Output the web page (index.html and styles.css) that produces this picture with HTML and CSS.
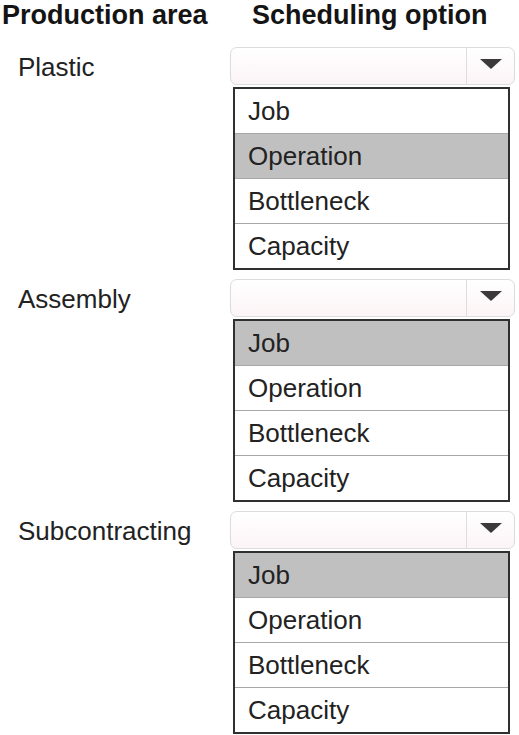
FILE: index.html
```html
<!DOCTYPE html>
<html>
<head>
<meta charset="utf-8">
<link rel="stylesheet" href="styles.css">
</head>
<body>
<div class="page">
  <div class="head">
    <div class="head-a">Production area</div>
    <div class="head-b">Scheduling option</div>
  </div>

  <div class="group">
    <div class="label">Plastic</div>
    <div class="select"><div class="field"></div><div class="btn"><span class="tri"></span></div></div>
    <div class="list">
      <div class="opt">Job</div>
      <div class="opt sel">Operation</div>
      <div class="opt">Bottleneck</div>
      <div class="opt">Capacity</div>
    </div>
  </div>

  <div class="group">
    <div class="label">Assembly</div>
    <div class="select"><div class="field"></div><div class="btn"><span class="tri"></span></div></div>
    <div class="list">
      <div class="opt sel">Job</div>
      <div class="opt">Operation</div>
      <div class="opt">Bottleneck</div>
      <div class="opt">Capacity</div>
    </div>
  </div>

  <div class="group">
    <div class="label">Subcontracting</div>
    <div class="select"><div class="field"></div><div class="btn"><span class="tri"></span></div></div>
    <div class="list">
      <div class="opt sel">Job</div>
      <div class="opt">Operation</div>
      <div class="opt">Bottleneck</div>
      <div class="opt">Capacity</div>
    </div>
  </div>
</div>
</body>
</html>
```

FILE: styles.css
```css
html, body {
  margin: 0;
  padding: 0;
  background: #ffffff;
}
body {
  font-family: "Liberation Sans", Arial, sans-serif;
  color: #222222;
  width: 519px;
  height: 735px;
  overflow: hidden;
}
.page {
  display: flex;
  flex-direction: column;
  gap: 9px;
}
.head {
  display: flex;
  font-weight: bold;
  font-size: 27px;
  line-height: 31px;
  color: #141414;
  margin-bottom: 7px;
}
.head-a {
  padding-left: 2px;
  width: 250px;
}
.group {
  display: grid;
  grid-template-columns: 230px 285px;
  grid-template-rows: 38px auto;
  row-gap: 2px;
}
.label {
  grid-column: 1;
  grid-row: 1;
  align-self: center;
  padding-left: 18px;
  font-size: 26px;
  line-height: 30px;
  padding-top: 2px;
  color: #222;
}
.select {
  grid-column: 2;
  grid-row: 1;
  display: flex;
  border: 1px solid #dcdcdc;
  border-radius: 7px;
  background: linear-gradient(#ffffff, #fcf4f6);
  box-shadow: 0 0 1px #eeeeee;
}
.field {
  flex: 1;
}
.btn {
  width: 47px;
  border-left: 1px solid #dddddd;
  display: flex;
  align-items: center;
  justify-content: center;
}
.tri {
  width: 0;
  height: 0;
  border-left: 11px solid transparent;
  border-right: 11px solid transparent;
  border-top: 10px solid #3a3a3a;
  margin-bottom: 4px;
}
.list {
  grid-column: 2;
  grid-row: 2;
  margin-left: 3px;
  width: 273px;
  border: 2px solid #303030;
  background: #ffffff;
}
.opt {
  height: 44px;
  line-height: 44px;
  padding-left: 13px;
  font-size: 26px;
  color: #222;
}
.opt + .opt {
  border-top: 1px solid #a8a8a8;
}
.opt.sel {
  background: #c0c0c0;
}
```
